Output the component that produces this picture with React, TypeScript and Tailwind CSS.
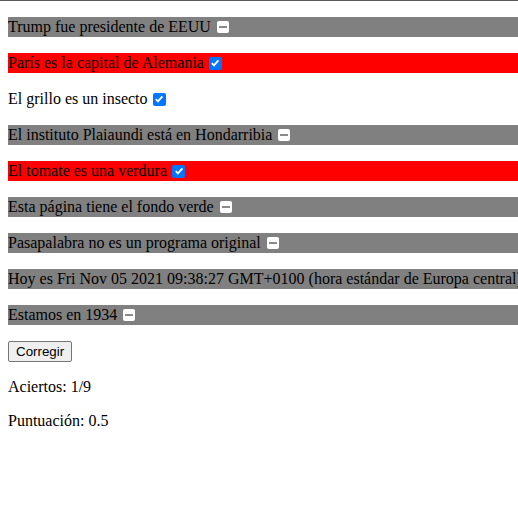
import React from "react";

type Row = { text: string; bg: string; box: "minus" | "check" | "none" };

const rows: Row[] = [
  { text: "Trump fue presidente de EEUU", bg: "bg-[#808080]", box: "minus" },
  { text: "París es la capital de Alemania", bg: "bg-[#ff0000]", box: "check" },
  { text: "El grillo es un insecto", bg: "", box: "check" },
  { text: "El instituto Plaiaundi está en Hondarribia", bg: "bg-[#808080]", box: "minus" },
  { text: "El tomate es una verdura", bg: "bg-[#ff0000]", box: "check" },
  { text: "Esta página tiene el fondo verde", bg: "bg-[#808080]", box: "minus" },
  { text: "Pasapalabra no es un programa original", bg: "bg-[#808080]", box: "minus" },
  { text: "Hoy es Fri Nov 05 2021 09:38:27 GMT+0100 (hora estándar de Europa central)", bg: "bg-[#808080]", box: "minus" },
  { text: "Estamos en 1934", bg: "bg-[#808080]", box: "minus" },
];

function Box({ kind }: { kind: Row["box"] }) {
  if (kind === "minus") {
    return (
      <span className="ml-[6px] w-[12px] h-[12px] shrink-0 rounded-[2px] bg-white flex items-center justify-center">
        <span className="block w-[8px] h-[2px] bg-[#8a8a8a]" />
      </span>
    );
  }
  if (kind === "check") {
    return (
      <span className="ml-[5px] w-[13px] h-[13px] shrink-0 rounded-[2px] bg-[#0075ff] flex items-center justify-center">
        <svg width="10" height="10" viewBox="0 0 10 10">
          <path d="M1.8 5.2 L4 7.4 L8.4 2.4" stroke="white" strokeWidth="1.9" fill="none" />
        </svg>
      </span>
    );
  }
  return null;
}

export default function App() {
  return (
    <div
      className="w-[518px] h-[518px] overflow-hidden bg-white border-t border-[#5a5a5a] text-black text-[16px]"
      style={{ fontFamily: '"Liberation Serif", "Times New Roman", serif' }}
    >
      <div className="pt-[16px] pl-[8px] flex flex-col">
        {rows.map((r, i) => (
          <div
            key={i}
            className={`h-[20px] mb-[16px] flex items-center whitespace-nowrap leading-[20px] ${r.bg}`}
          >
            <span>{r.text}</span>
            <Box kind={r.box} />
          </div>
        ))}
        <div className="mb-[16px] flex">
          <button
            className="h-[21px] px-[7px] border border-[#767676] rounded-[2px] bg-[#efefef] text-[13.33px] leading-[15px]"
            style={{ fontFamily: '"Liberation Sans", Arial, sans-serif' }}
          >
            Corregir
          </button>
        </div>
        <p className="mb-[16px] leading-[18px]">Aciertos: 1/9</p>
        <p className="leading-[18px]">Puntuación: 0.5</p>
      </div>
    </div>
  );
}
